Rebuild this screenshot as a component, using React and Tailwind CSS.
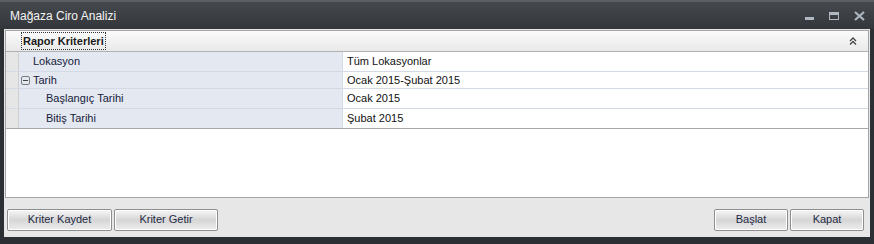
import React from 'react';

const rows = [
  { label: 'Lokasyon', value: 'Tüm Lokasyonlar', indent: 'pl-[14px]', h: 'h-[20px]' },
  { label: 'Tarih', value: 'Ocak 2015-Şubat 2015', toggle: true, h: 'h-[17px]' },
  { label: 'Başlangıç Tarihi', value: 'Ocak 2015', indent: 'pl-[27px]', h: 'h-[20px]' },
  { label: 'Bitiş Tarihi', value: 'Şubat 2015', indent: 'pl-[27px]', h: 'h-[20px]', last: true },
];

const Btn = ({ children, w }) => (
  <button
    className={`${w} h-[22px] rounded-[2px] border border-[#8e8e8e] bg-gradient-to-b from-[#f7f7f7] via-[#d6d6d6] to-[#ededed] text-[11px] text-[#1e2a44] shadow-[inset_0_0_0_1px_#ffffff]`}
  >
    {children}
  </button>
);

const App = () => {
  return (
    <div className="w-[874px] h-[244px] bg-[#2c2f33] flex flex-col font-['Liberation_Sans',Arial,sans-serif] text-[11px] text-[#1b1b1b]">
      {/* title bar */}
      <div className="h-[29px] flex items-center border-t-2 border-[#5b5e63] bg-gradient-to-b from-[#45484d] to-[#33363b]">
        <span className="pl-[10px] text-[12px] text-[#f4f4f4] flex-1">Mağaza Ciro Analizi</span>
        <div className="flex items-center gap-[15px] pr-[9px]">
          <div className="w-[9px] h-[3px] bg-[#aeb7c2] mt-[6px]" />
          <div className="w-[10px] h-[8px] border border-[#aeb7c2] border-t-[3px]" />
          <svg width="11" height="10" viewBox="0 0 11 10">
            <path d="M1 1 L10 9 M10 1 L1 9" stroke="#aeb7c2" strokeWidth="2.2" />
          </svg>
        </div>
      </div>

      {/* body */}
      <div className="flex-1 ml-[4px] mr-[4px] mb-[7px] bg-[#e7e7e7] flex flex-col">
        <div className="mt-[1px] mx-[1px] h-[168px] bg-white border border-[#a3a3a3] flex flex-col">
          <div className="h-[21px] flex items-center border-b border-[#b1b1b1] bg-gradient-to-b from-[#fbfbfb] to-[#e9e9e9]">
            <span className="ml-[16px] font-bold text-[11px] px-[1px] outline outline-1 outline-dotted outline-[#333]">Rapor Kriterleri</span>
            <svg className="ml-auto mr-[11px]" width="8" height="8" viewBox="0 0 8 8">
              <path d="M1 4 L4 1 L7 4 M1 7.5 L4 4.5 L7 7.5" stroke="#444" strokeWidth="1.3" fill="none" />
            </svg>
          </div>
          {rows.map((r) => (
            <div key={r.label} className={`${r.h} flex border-b ${r.last ? 'border-[#a8a8a8]' : 'border-[#d3d9e5]'}`}>
              <div className="w-[13px] bg-[#e6e6e6] border-r border-[#cfcfcf]" />
              <div className={`w-[324px] bg-[#e4e8f1] border-r border-[#d3d9e5] flex items-center ${r.indent || ''}`}>
                {r.toggle && (
                  <span className="ml-[2px] mr-[3px] w-[9px] h-[9px] border border-[#7c7c7c] rounded-[2px] flex items-center justify-center">
                    <span className="w-[5px] h-[1px] bg-[#444]" />
                  </span>
                )}
                <span className="text-[#15213a]">{r.label}</span>
              </div>
              <div className="flex-1 flex items-center pl-[4px] text-[#111]">{r.value}</div>
            </div>
          ))}
        </div>

        <div className="flex-1 flex items-center justify-between pl-[3px] pr-[6px] pt-[4px]">
          <div className="flex gap-[2px]">
            <Btn w="w-[105px]">Kriter Kaydet</Btn>
            <Btn w="w-[104px]">Kriter Getir</Btn>
          </div>
          <div className="flex gap-[2px]">
            <Btn w="w-[74px]">Başlat</Btn>
            <Btn w="w-[74px]">Kapat</Btn>
          </div>
        </div>
      </div>
    </div>
  );
};

export default App;
